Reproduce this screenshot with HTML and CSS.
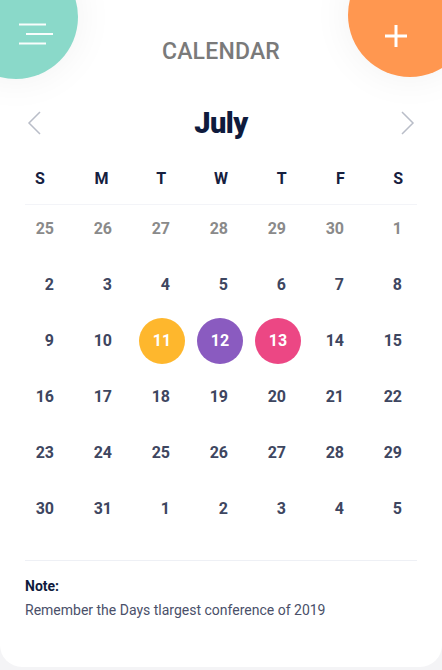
FILE: index.html
```html
<!DOCTYPE html>
<html>
<head>
<meta charset="utf-8">
<link rel="stylesheet" href="styles.css">
</head>
<body>
<div class="card">
  <button class="fab fab-menu" aria-label="Menu">
    <svg class="fab-icon menu-icon" width="36" height="22" viewBox="0 0 36 22">
      <line x1="1" y1="1.5" x2="28" y2="1.5"/>
      <line x1="8" y1="11" x2="35" y2="11"/>
      <line x1="1" y1="20.5" x2="28" y2="20.5"/>
    </svg>
  </button>
  <button class="fab fab-add" aria-label="Add">
    <svg class="fab-icon add-icon" width="22" height="22" viewBox="0 0 22 22">
      <line x1="11" y1="0" x2="11" y2="22"/>
      <line x1="0" y1="11" x2="22" y2="11"/>
    </svg>
  </button>

  <header class="top">
    <h1 class="title">CALENDAR</h1>
  </header>

  <main class="body">
    <div class="month-nav">
      <svg class="chev" width="14" height="24" viewBox="0 0 14 24"><polyline points="13,1 2,12 13,23"/></svg>
      <h2 class="month">July</h2>
      <svg class="chev" width="14" height="24" viewBox="0 0 14 24"><polyline points="1,1 12,12 1,23"/></svg>
    </div>

    <div class="weekdays">
      <span>S</span><span>M</span><span>T</span><span>W</span><span>T</span><span>F</span><span>S</span>
    </div>

    <div class="days">
      <div class="day muted"><span>25</span></div>
      <div class="day muted"><span>26</span></div>
      <div class="day muted"><span>27</span></div>
      <div class="day muted"><span>28</span></div>
      <div class="day muted"><span>29</span></div>
      <div class="day muted"><span>30</span></div>
      <div class="day muted"><span>1</span></div>

      <div class="day"><span>2</span></div>
      <div class="day"><span>3</span></div>
      <div class="day"><span>4</span></div>
      <div class="day"><span>5</span></div>
      <div class="day"><span>6</span></div>
      <div class="day"><span>7</span></div>
      <div class="day"><span>8</span></div>

      <div class="day"><span>9</span></div>
      <div class="day"><span>10</span></div>
      <div class="day"><span class="mark yellow">11</span></div>
      <div class="day"><span class="mark purple">12</span></div>
      <div class="day"><span class="mark pink">13</span></div>
      <div class="day"><span>14</span></div>
      <div class="day"><span>15</span></div>

      <div class="day"><span>16</span></div>
      <div class="day"><span>17</span></div>
      <div class="day"><span>18</span></div>
      <div class="day"><span>19</span></div>
      <div class="day"><span>20</span></div>
      <div class="day"><span>21</span></div>
      <div class="day"><span>22</span></div>

      <div class="day"><span>23</span></div>
      <div class="day"><span>24</span></div>
      <div class="day"><span>25</span></div>
      <div class="day"><span>26</span></div>
      <div class="day"><span>27</span></div>
      <div class="day"><span>28</span></div>
      <div class="day"><span>29</span></div>

      <div class="day"><span>30</span></div>
      <div class="day"><span>31</span></div>
      <div class="day"><span>1</span></div>
      <div class="day"><span>2</span></div>
      <div class="day"><span>3</span></div>
      <div class="day"><span>4</span></div>
      <div class="day"><span>5</span></div>
    </div>

    <section class="note">
      <h3 class="note-title">Note:</h3>
      <p class="note-text">Remember the Days tlargest conference of 2019</p>
    </section>
  </main>
</div>
</body>
</html>
```

FILE: styles.css
```css
* { box-sizing: border-box; }

html, body {
  margin: 0;
  padding: 0;
}

body {
  background: #f4f4f6;
  font-family: Roboto, "Liberation Sans", Arial, sans-serif;
  width: 442px;
  height: 670px;
  overflow: hidden;
}

.card {
  position: relative;
  width: 442px;
  height: 667px;
  background: #ffffff;
  border-radius: 0 0 22px 22px;
  overflow: hidden;
}

.fab {
  position: absolute;
  width: 124px;
  height: 124px;
  border: 0;
  padding: 0;
  border-radius: 50%;
  box-shadow: 0 0 40px rgba(0, 0, 0, 0.06);
  cursor: pointer;
}

.fab-menu {
  left: -46px;
  top: -45px;
  background: #8ad9c9;
}

.fab-add {
  left: 348px;
  top: -47px;
  background: #ff9750;
}

.fab-icon {
  position: absolute;
  stroke: #ffffff;
  fill: none;
}

.menu-icon {
  left: 64px;
  top: 68px;
  stroke-width: 2;
  opacity: 0.95;
}

.add-icon {
  left: 37px;
  top: 72px;
  stroke-width: 3;
}

.top {
  height: 101px;
  display: flex;
  align-items: center;
  justify-content: center;
  padding-top: 1px;
}

.title {
  margin: 0;
  font-size: 23px;
  font-weight: 500;
  color: #7a7a7a;
  letter-spacing: 0.2px;
}

.body {
  padding: 0 25px;
}

.month-nav {
  height: 43px;
  display: flex;
  align-items: center;
  justify-content: space-between;
  padding: 0 2px;
}

.chev {
  fill: none;
  stroke: #b9bdc8;
  stroke-width: 1.5;
}

.month {
  margin: 0;
  font-size: 29px;
  font-weight: 900;
  color: #0f1b3d;
  letter-spacing: -0.5px;
}

.weekdays {
  margin: 24px -11px 0 -15px;
  display: grid;
  grid-template-columns: repeat(7, 1fr);
  padding-bottom: 15px;
  position: relative;
}

.weekdays::after {
  content: "";
  position: absolute;
  left: 15px;
  right: 11px;
  bottom: 0;
  height: 1px;
  background: #f3f4f8;
}

.weekdays span {
  text-align: center;
  font-size: 16px;
  font-weight: 700;
  line-height: 22px;
  color: #16203f;
}

.weekdays span:nth-child(2) { padding-left: 4px; }
.weekdays span:nth-child(3) { padding-left: 4px; }
.weekdays span:nth-child(4) { padding-left: 4px; }
.weekdays span:nth-child(5) { padding-left: 6px; }
.weekdays span:nth-child(6) { padding-left: 4px; }

.days {
  margin: 1px -6px 0 -8px;
  display: grid;
  grid-template-columns: repeat(7, 1fr);
  grid-auto-rows: 46px;
  row-gap: 10px;
}

.day {
  display: flex;
  justify-content: center;
}

.day span {
  width: 46px;
  height: 46px;
  line-height: 46px;
  text-align: right;
  padding-right: 15px;
  font-size: 16px;
  font-weight: 700;
  color: #3e4660;
}

.day.muted span {
  color: #8a8a8a;
}

.day .mark {
  text-align: center;
  padding-right: 0;
  border-radius: 50%;
  color: #ffffff;
}

.yellow { background: #feb72d; }
.purple { background: #8a5bc0; }
.pink { background: #ec4784; }

.note {
  margin-top: 28px;
  border-top: 1px solid #eef0f5;
  padding-top: 15px;
}

.note-title {
  margin: 0;
  font-size: 14px;
  font-weight: 700;
  line-height: 20px;
  color: #0f1b3d;
}

.note-text {
  margin: 4px 0 0;
  font-size: 14px;
  line-height: 20px;
  color: #4a5069;
}
```
